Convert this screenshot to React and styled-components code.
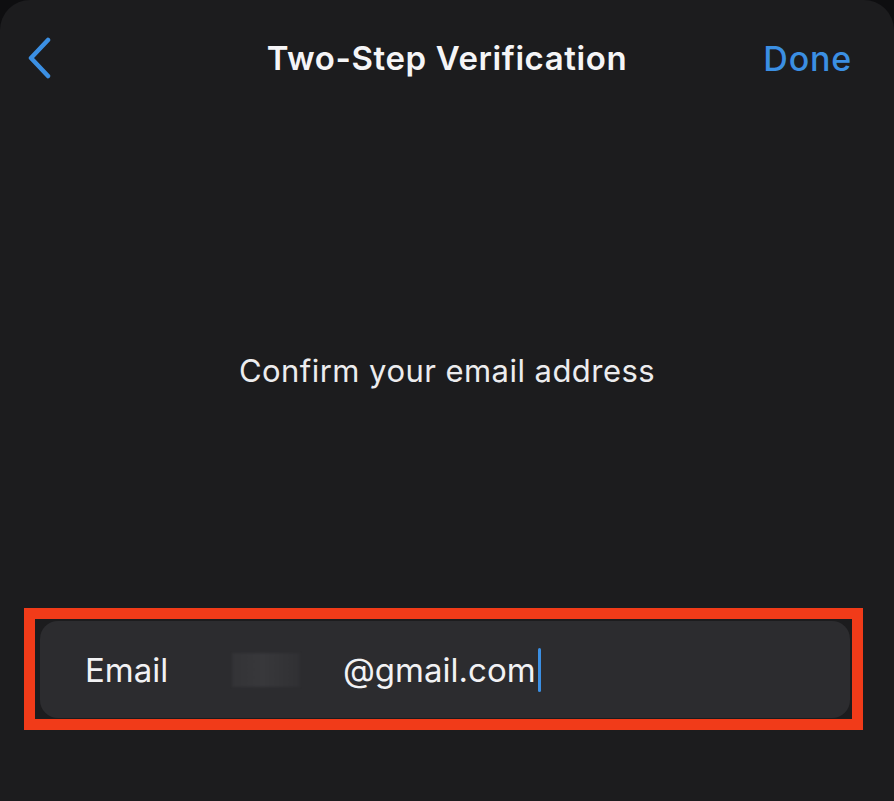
import React from 'react';
import styled, { createGlobalStyle } from 'styled-components';

const GlobalStyle = createGlobalStyle`
  html, body {
    margin: 0;
    padding: 0;
    background: #0e0e10;
  }
  body {
    font-family: Inter, "Noto Sans", sans-serif;
    -webkit-font-smoothing: antialiased;
  }
`;

const Screen = styled.div`
  width: 894px;
  height: 801px;
  background: #1c1c1e;
  border-radius: 30px 30px 0 0;
  display: flex;
  flex-direction: column;
  overflow: hidden;
`;

const NavBar = styled.div`
  height: 116px;
  display: grid;
  grid-template-columns: 136px 1fr 120px;
  align-items: center;
  padding: 0 42px 0 26px;
`;

const BackButton = styled.button`
  background: none;
  border: none;
  padding: 0;
  width: 28px;
  height: 44px;
  display: flex;
  align-items: center;
  cursor: pointer;
`;

const Title = styled.h1`
  margin: 0;
  text-align: center;
  color: #f5f5f7;
  font-size: 33px;
  font-weight: 600;
  letter-spacing: 0.6px;
`;

const DoneButton = styled.button`
  justify-self: end;
  background: none;
  border: none;
  padding: 0;
  color: #3b8fe3;
  font-family: inherit;
  font-size: 34px;
  font-weight: 500;
  letter-spacing: 0.8px;
  cursor: pointer;
`;

const Prompt = styled.div`
  height: 476px;
  padding-top: 16px;
  display: flex;
  align-items: center;
  justify-content: center;
  color: #ececee;
  font-size: 31px;
  letter-spacing: 0.45px;
`;

const Highlight = styled.div`
  margin: 0 31px 0 24px;
  height: 122px;
  box-sizing: border-box;
  border: 11px solid #f13b19;
  padding: 2px 2px 1px 5px;
  display: flex;
`;

const Field = styled.div`
  flex: 1;
  background: #2c2c2f;
  border-radius: 18px;
  display: flex;
  align-items: center;
  padding-left: 45px;
  font-size: 33px;
  color: #f2f2f4;
`;

const Label = styled.span`
  width: 147px;
`;

const Redacted = styled.span`
  width: 68px;
  height: 34px;
  margin-right: 43px;
  background: linear-gradient(90deg, #333336 0%, #38383b 45%, #303033 100%);
  filter: blur(1px);
`;

const Value = styled.span`
  display: flex;
  align-items: center;
`;

const Caret = styled.span`
  width: 3px;
  height: 44px;
  margin-left: 2px;
  background: #3b8fe3;
  border-radius: 2px;
`;

export default function App() {
  return (
    <>
      <GlobalStyle />
      <Screen>
        <NavBar>
          <BackButton aria-label="Back">
            <svg width="26" height="42" viewBox="0 0 26 42" fill="none">
              <path d="M22 3 L5 21 L22 39" stroke="#3b8fe3" strokeWidth="4.5" strokeLinecap="round" strokeLinejoin="round" />
            </svg>
          </BackButton>
          <Title>Two-Step Verification</Title>
          <DoneButton>Done</DoneButton>
        </NavBar>
        <Prompt>Confirm your email address</Prompt>
        <Highlight>
          <Field>
            <Label>Email</Label>
            <Redacted />
            <Value>
              @gmail.com
              <Caret />
            </Value>
          </Field>
        </Highlight>
      </Screen>
    </>
  );
}
